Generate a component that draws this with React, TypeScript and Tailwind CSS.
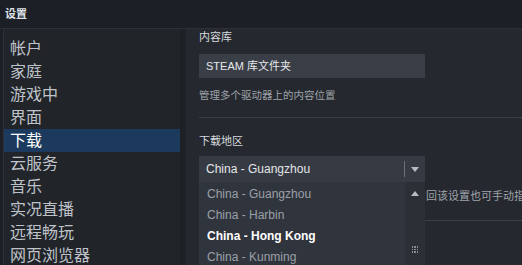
import React from "react";

const navItems = [
  "帐户",
  "家庭",
  "游戏中",
  "界面",
  "下载",
  "云服务",
  "音乐",
  "实况直播",
  "远程畅玩",
  "网页浏览器",
];

const regions = [
  "China - Guangzhou",
  "China - Harbin",
  "China - Hong Kong",
  "China - Kunming",
];

const font = {
  fontFamily: '"Liberation Sans", "Noto Sans CJK SC", Arial, sans-serif',
};

export default function App() {
  return (
    <div
      className="w-[522px] h-[265px] overflow-hidden bg-[#1c1f25] flex flex-col"
      style={font}
    >
      {/* Title bar */}
      <div className="h-[28px] shrink-0 flex items-center px-[5px] text-[11px] text-[#dfe3e8] font-bold">
        设置
      </div>

      <div className="flex flex-1 min-h-0 border-t border-[#2c3038]">
        {/* Sidebar */}
        <div className="w-[177px] ml-[3px] shrink-0 bg-[#212429] border-l border-[#2d3139] pt-[8px] flex flex-col">
          {navItems.map((item) => (
            <div
              key={item}
              className={`h-[23px] shrink-0 flex items-center pl-[6px] text-[16px] leading-none ${
                item === "下载"
                  ? "bg-[#1b3a5e] text-white"
                  : "text-[#bfc3c9]"
              }`}
            >
              {item}
            </div>
          ))}
        </div>

        <div className="w-[6px] shrink-0 bg-[#1d2025]" />

        {/* Content */}
        <div className="flex-1 bg-[#25282e] pl-[13px]">
          <div className="text-[11px] text-[#d5d9de] h-[16px] flex items-center">
            内容库
          </div>
          <div className="mt-[9px] w-[226px] h-[24px] bg-[#3a3e46] flex items-center pl-[7px] text-[11px] text-[#e6e9ec]">
            STEAM 库文件夹
          </div>
          <div className="mt-[11px] text-[10.5px] text-[#9ea3aa] h-[14px] flex items-center">
            管理多个驱动器上的内容位置
          </div>
          <div className="mt-[14px] h-px bg-[#3a3e45]" />
          <div className="mt-[16px] text-[11px] text-[#d5d9de] h-[14px] flex items-center">
            下载地区
          </div>

          <div className="mt-[8px] flex items-start">
            <div className="w-[226px] shrink-0">
              {/* Select */}
              <div className="h-[26px] bg-[#363a42] flex items-center">
                <div className="flex-1 pl-[7px] text-[12px] text-[#e4e7ea]">
                  China - Guangzhou
                </div>
                <div className="w-px h-[16px] bg-[#6d727a]" />
                <div className="w-[20px] flex items-center justify-center">
                  <svg width="8" height="5" viewBox="0 0 8 5">
                    <path d="M0 0h8L4 5z" fill="#b8bcc2" />
                  </svg>
                </div>
              </div>
              {/* List */}
              <div className="bg-[#30343c] flex">
                <div className="flex-1 pt-[1px]">
                  {regions.map((r) => (
                    <div
                      key={r}
                      className={`h-[21px] flex items-center pl-[8px] text-[12px] ${
                        r === "China - Hong Kong"
                          ? "text-white font-bold"
                          : "text-[#9ba0a8]"
                      }`}
                    >
                      {r}
                    </div>
                  ))}
                </div>
                <div className="w-[20px] bg-[#2b2f36] flex flex-col items-center pt-[9px]">
                  <svg width="8" height="5" viewBox="0 0 8 5">
                    <path d="M0 5h8L4 0z" fill="#b8bcc2" />
                  </svg>
                  <div className="mt-[50px] w-[7px] h-[7px] grid grid-cols-3 gap-[1px]">
                    {Array.from({ length: 9 }).map((_, i) => (
                      <div key={i} className="bg-[#8a8f97] w-[1.5px] h-[1.5px]" />
                    ))}
                  </div>
                </div>
              </div>
            </div>
            <div className="flex-1 min-w-0">
              <div className="mt-[33px] pl-[1px] h-[14px] flex items-center text-[11px] text-[#9ea3aa] whitespace-nowrap overflow-hidden">
                回该设置也可手动指定
              </div>
              <div className="mt-[17px] h-px bg-[#3a3e45]" />
            </div>
          </div>
        </div>
      </div>
    </div>
  );
}
